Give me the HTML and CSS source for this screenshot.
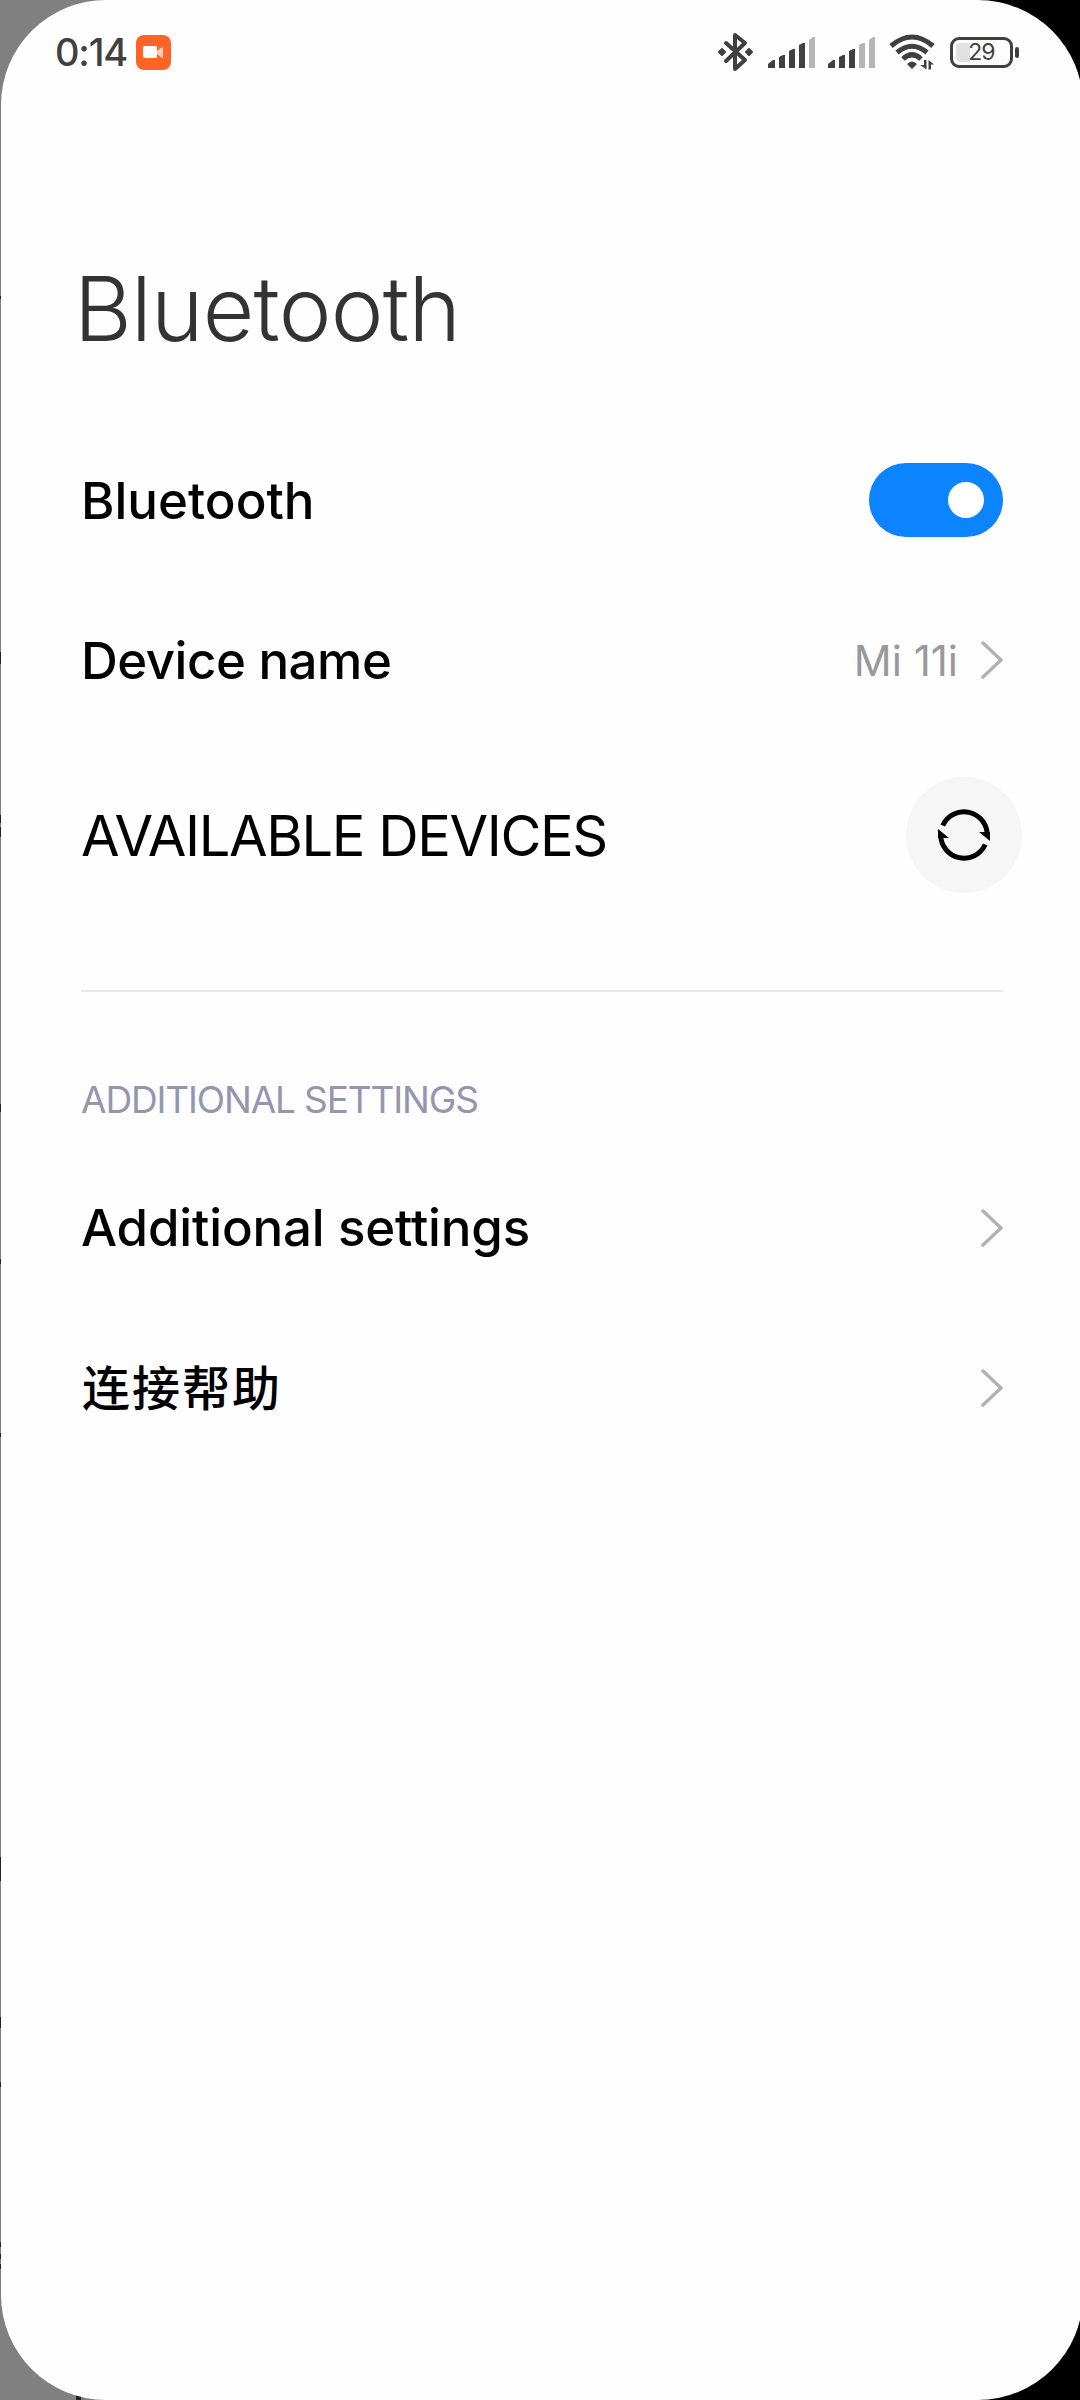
FILE: index.html
```html
<!DOCTYPE html>
<html lang="en">
<head>
<meta charset="utf-8">
<title>Bluetooth</title>
<link rel="stylesheet" href="styles.css">
</head>
<body>
<svg class="edge" viewBox="0 0 100 2400" aria-hidden="true"><path fill="#222" d="M0 296h1v3H0zM0 652h1v12H0zM0 815h1v8H0zM0 827h1v10H0zM0 1104h1v8H0zM0 1259h1v5H0zM0 1433h1v4H0zM0 1857h1v24H0zM0 2017h1v11H0zM0 2082h1v5H0zM0 2242h1v5H0zM0 2254h1v5H0zM0 2264h1v5H0zM76 2395h5v5h-5z"/></svg>
<div class="screen">
  <header class="status">
    <div class="status-left">
      <span class="clock">0:14</span>
      <svg class="recorder" viewBox="0 0 35 35"><rect width="35" height="35" rx="8" fill="#ff6427"/><path fill="#fff" d="M8 11h12q1 0 1 1v11H9q-2 0-2-2v-8q0-2 1-2z"/><path fill="#ffcdb8" d="M21 16l5-4q1 0 1 1v9q0 1-1 1l-5-4z"/></svg>
    </div>
    <div class="status-right">
      <svg class="bt" viewBox="0 0 38 40"><path d="M9 11l19 17-10 9V3l10 8L9 29" fill="none" stroke="#404040" stroke-width="4" stroke-linecap="round" stroke-linejoin="round"/><path d="M2 20l3-3 3 3-3 3zM29 20l3-3 3 3-3 3z" fill="#404040" stroke="#404040" stroke-width="2" stroke-linejoin="round"/></svg>
      <svg class="signal" viewBox="0 0 48 31"><path fill="#404040" d="M0 31v-4l5-4h2v8zM11 31V20l4-2h2v13zM21 31V14l4-2h2v19zM31 31V8l4-2h2v25z"/><path fill="#b5b5b5" d="M41 31V3l4-3h2v31z"/></svg>
      <svg class="signal" viewBox="0 0 48 31"><path fill="#404040" d="M0 31v-4l5-4h2v8zM11 31V20l4-2h2v13zM21 31V14l4-2h2v19z"/><path fill="#b5b5b5" d="M31 31V8l4-2h2v25zM41 31V3l4-3h2v31z"/></svg>
      <svg class="wifi" viewBox="0 0 46 36"><g fill="none" stroke="#404040" stroke-width="5"><path d="M2 12Q23-6 44 12"/><path d="M8 18.500Q23 6 38 18.500"/><path d="M14 25Q23 16.500 32 25"/></g><path fill="#404040" d="M18 30q5-5 10 0l-5 5zM35 26h2.500v9.500L31 31h4zM39.500 35.500V26l5.500 4.500h-3v5z"/></svg>
      <div class="battery"><span class="battery-level"></span><span class="battery-text">29</span></div>
    </div>
  </header>
  <main class="content">
    <h1 class="title">Bluetooth</h1>
    <div class="row"><span class="label label-bt">Bluetooth</span><span class="switch"><span class="knob"></span></span></div>
    <div class="row"><span class="label label-device">Device name</span><span class="value">Mi 11i</span><svg class="chevron" viewBox="0 0 22 38"><path d="M2 2l18 17L2 36"/></svg></div>
    <div class="row row-available"><h2 class="available">AVAILABLE DEVICES</h2>
      <button class="refresh" aria-label="Refresh"><svg viewBox="0 0 52 52"><g fill="none" stroke="#000" stroke-width="5"><path d="M4.800 16.500A23.300 23.300 0 0 1 49.300 26"/><path d="M47.200 35.500A23.300 23.300 0 0 1 2.700 26"/></g><path d="M41 23h11v9zM11 29H0v-9z"/></svg></button>
    </div>
    <hr class="divider">
    <h3 class="section">ADDITIONAL SETTINGS</h3>
    <div class="row row-additional"><span class="label label-additional">Additional settings</span><svg class="chevron" viewBox="0 0 22 38"><path d="M2 2l18 17L2 36"/></svg></div>
    <div class="row"><span class="label label-help" lang="zh-CN">连接帮助</span><svg class="chevron" viewBox="0 0 22 38"><path d="M2 2l18 17L2 36"/></svg></div>
  </main>
</div>
</body>
</html>
```
FILE: styles.css
```css
* { box-sizing: border-box; }
html { background: linear-gradient(90deg, #808080 540px, #000 540px); }
body { margin: 0; width: 1080px; height: 2400px; overflow: hidden; font-family: Inter, "Noto Sans CJK SC", sans-serif; color: #000; }
h1, h2, h3 { margin: 0; font-weight: 400; }
svg { display: block; flex: none; }
.edge { position: absolute; left: 0; top: 0; width: 100px; height: 2400px; }
.screen { position: relative; width: 1082px; height: 2400px; margin-left: 1px; border-radius: 105px; background: #fefefe; overflow: hidden; }
.status { height: 104px; width: 1018px; padding-left: 54px; display: flex; align-items: center; justify-content: space-between; }
.status-left, .status-right { display: flex; align-items: center; }
.clock { font-size: 38px; font-weight: 500; line-height: 46px; letter-spacing: -1.2px; color: #404040; width: 81px; }
.recorder { width: 35px; height: 35px; }
.bt { width: 38px; height: 40px; margin: 0 13px 0 -1px; }
.signal { width: 48px; height: 31px; margin: 0 12px 0 0; }
.wifi { width: 46px; height: 36px; margin: 0 15px 0 1px; }
.battery { position: relative; width: 63px; height: 31px; border: 3px solid #404040; border-radius: 9px; display: flex; align-items: center; justify-content: center; margin-right: 6px; }
.battery::after { content: ""; position: absolute; left: 62px; top: 7px; width: 4px; height: 11px; border-radius: 2px; background: #404040; }
.battery-level { position: absolute; left: 3px; top: 3px; width: 14px; height: 19px; border-radius: 4px 0 0 4px; background: #e1e1e1; }
.battery-text { position: relative; font-size: 23px; line-height: 25px; letter-spacing: -1px; color: #404040; }
.content { padding: 0 80px 0 80px; }
.title { height: 316px; padding-top: 151px; font-size: 89px; line-height: 108px; font-weight: 300; letter-spacing: -0.75px; color: #333; margin-left: -7px; }
.row { height: 160px; display: flex; align-items: center; }
.label { font-size: 51px; line-height: 64px; font-weight: 500; flex: 1; white-space: nowrap; }
.label-bt, .label-device { padding-top: 2px; }
.label-device { letter-spacing: -0.5px; }
.label-additional { letter-spacing: -0.16px; }
.label-help { font-family: "Noto Sans CJK SC", sans-serif; font-size: 48px; letter-spacing: 2px; padding: 0 0 7px 1px; }
.switch { width: 134px; height: 74px; border-radius: 37px; background: #0d84ff; padding: 19px; display: flex; justify-content: flex-end; }
.knob { width: 36px; height: 36px; border-radius: 50%; background: #fff; }
.value { font-size: 42px; line-height: 52px; padding-top: 2px; color: #999; margin-right: 23px; }
.chevron { width: 22px; height: 38px; fill: none; stroke: #b2b2b2; stroke-width: 3.500; stroke-linecap: round; stroke-linejoin: round; }
.row-available { height: 190px; margin-right: -19px; }
.available { flex: 1; font-size: 56px; line-height: 68px; padding-top: 2px; letter-spacing: -1.4px; white-space: nowrap; }
.refresh { width: 116px; height: 116px; border: 0; padding: 0; border-radius: 50%; background: #f6f6f6; display: flex; align-items: center; justify-content: center; }
.refresh svg { width: 52px; height: 52px; }
.divider { height: 2px; border: 0; margin: 60px 0 0; background: #e8e8e8; }
.section { margin-top: 85px; font-size: 37px; line-height: 46px; letter-spacing: -1.15px; color: #9496ae; white-space: nowrap; }
.row-additional { margin-top: 25px; }
```
